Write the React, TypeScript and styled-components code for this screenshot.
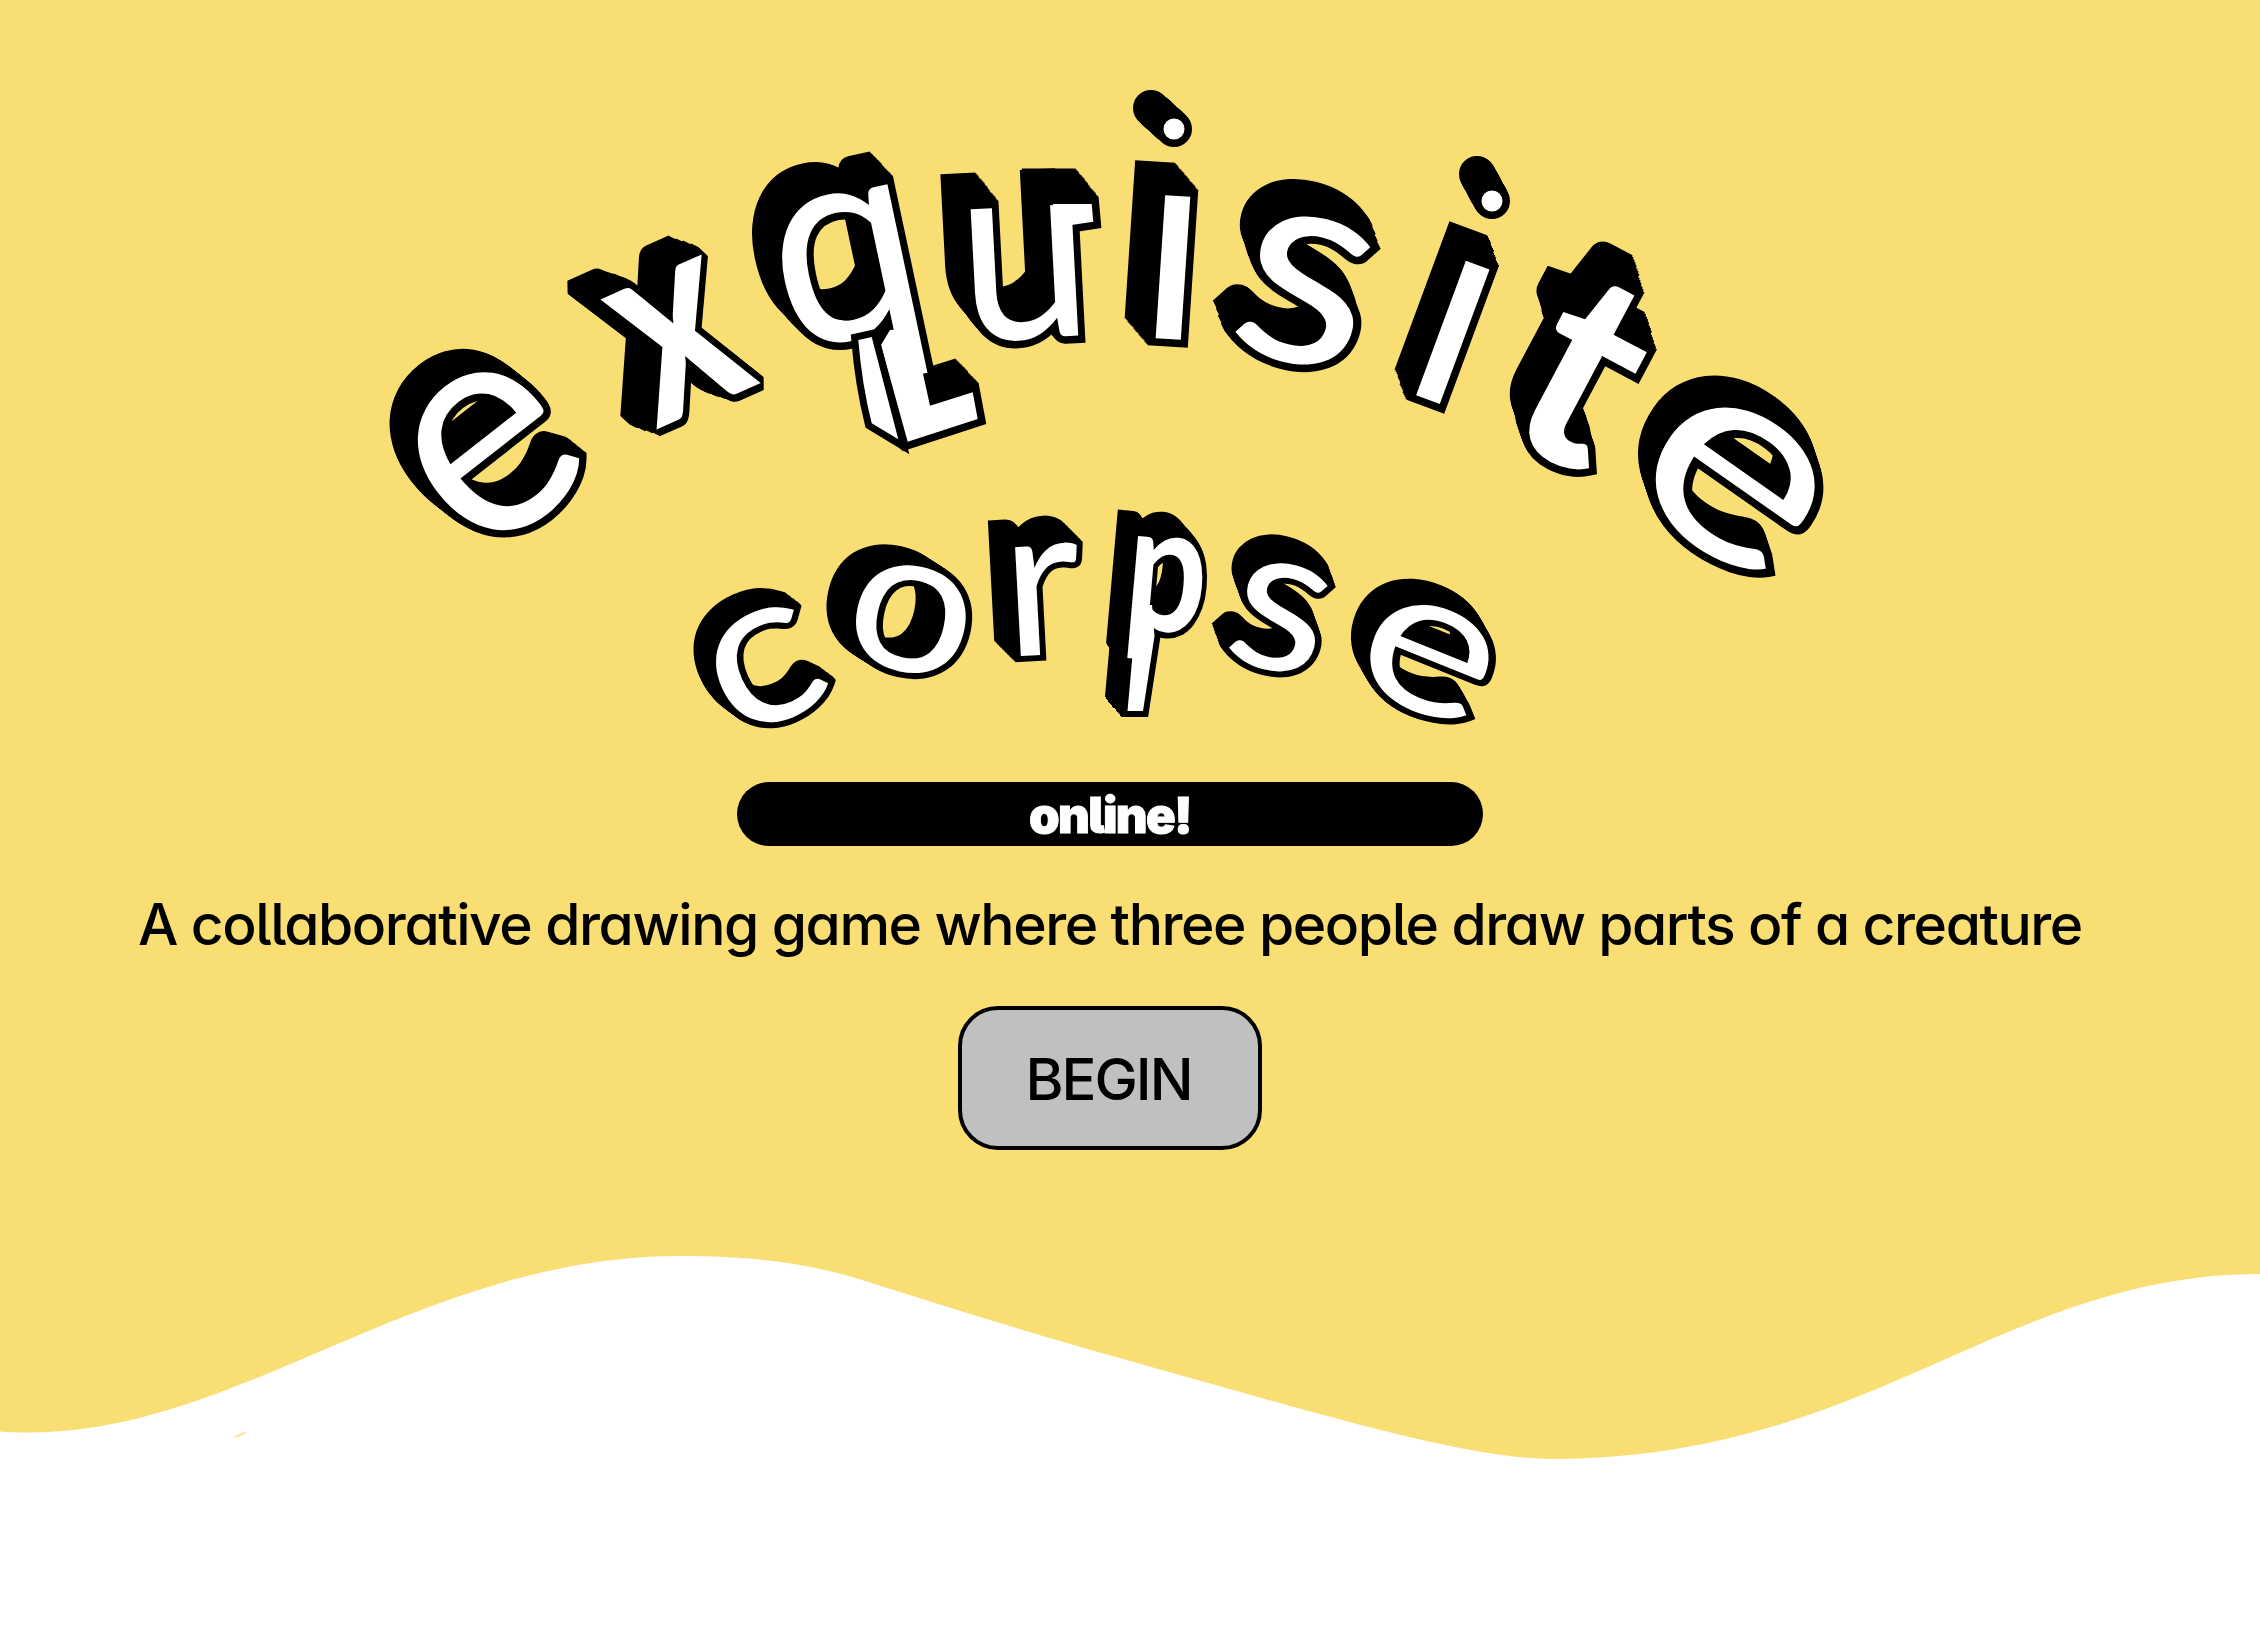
import React from "react";
import styled, { createGlobalStyle } from "styled-components";

const YELLOW = "#f9de74";

const GlobalStyle = createGlobalStyle`
  body {
    margin: 0;
    background: #fff;
    font-family: Inter, "Liberation Sans", sans-serif;
    font-feature-settings: "cv11", "cv05";
  }
`;

const Page = styled.main`
  min-height: 1636px;
  overflow: hidden;
  background: ${YELLOW};
`;

const Hero = styled.section`
  display: flex;
  flex-direction: column;
  align-items: center;
  box-sizing: border-box;
  height: 1200px;
  padding: 80px 40px 0 0;
`;

const Title = styled.h1`
  margin: 0;
  line-height: 0;
`;

const Logo = styled.svg`
  display: block;
  width: 1480px;
  height: 660px;
  overflow: visible;
`;

/* Doubling hard shadows sweeps the outlined glyph along the depth vector. */
const Extruded = styled.g<{ $dx: number; $dy: number }>`
  filter: ${({ $dx, $dy }) =>
    [1, 2, 4, 8, 16]
      .map((n) => `drop-shadow(${(($dx * n) / 31).toFixed(2)}px ${(($dy * n) / 31).toFixed(2)}px 0 #000)`)
      .join(" ")};
`;

const Glyph = styled.text<{ $size: number; $outline: number; $weight: number }>`
  font-family: Lato, "Liberation Sans", sans-serif;
  font-size: ${({ $size }) => $size}px;
  font-weight: ${({ $weight }) => $weight};
  text-anchor: middle;
  fill: #fff;
  stroke: #000;
  stroke-width: ${({ $outline }) => $outline * 2}px;
  stroke-linejoin: miter;
  stroke-miterlimit: 2;
  paint-order: stroke;
`;

const FlourishEdge = styled.path<{ $outline: number }>`
  fill: none;
  stroke: #000;
  stroke-width: ${({ $outline }) => $outline * 2}px;
`;

const FlourishFace = styled.path`
  fill: #fff;
`;

const Dot = styled.circle<{ $outline: number }>`
  fill: #fff;
  stroke: #000;
  stroke-width: ${({ $outline }) => $outline * 2}px;
  paint-order: stroke;
`;

const SidePanel = styled.path`
  fill: #fff;
  stroke: #000;
  stroke-width: 14px;
  paint-order: stroke;
`;

const Badge = styled.div`
  display: flex;
  align-items: center;
  justify-content: center;
  box-sizing: border-box;
  width: 746px;
  height: 64px;
  margin-top: 42px;
  padding-top: 3px;
  border-radius: 32px;
  background: #000;
  color: #fff;
  font-size: 49px;
  font-weight: 900;
  letter-spacing: -1.7px;
  -webkit-text-stroke: 1px #fff;
`;

const Tagline = styled.p`
  margin: 44px 0 0;
  height: 70px;
  line-height: 70px;
  white-space: nowrap;
  color: #000;
  font-size: 57px;
  font-weight: 500;
  letter-spacing: -1.42px;
`;

const BeginButton = styled.button`
  width: 304px;
  height: 144px;
  margin-top: 46px;
  padding: 2px 3px 0 0;
  border: 4px solid #000;
  border-radius: 40px;
  background: #c0c0c0;
  color: #000;
  font-family: inherit;
  font-size: 58px;
  font-weight: 500;
  letter-spacing: -2px;
`;

const Wave = styled.svg`
  display: block;
  width: 100%;
  height: 436px;
`;

type Letter = {
  char: string;
  x: number;
  y: number;
  size: number;
  turn: number;
  depth: [number, number];
  stretch?: number;
  mid?: number;
  weight?: number;
  dot?: { at: [number, number]; depth: [number, number] };
  flourish?: string;
};

const EXQUISITE: Letter[] = [
  { char: "e", x: 492, y: 453, size: 314, turn: -38, depth: [-19, -14], stretch: 0.96 },
  { char: "x", x: 680, y: 342, size: 276, turn: -24, depth: [-29, -8], stretch: 0.8, weight: 700 },
  {
    char: "q", x: 847, y: 266, size: 284, turn: -12, depth: [-20, -22], stretch: 0.95,
    flourish: "M890 330 L881 345 L907.7 441.7 L977.7 419 L972.7 392.3 L930 405.7 L913 328 Z",
  },
  {
    char: "u", x: 1025, y: 272, size: 260, turn: -3, depth: [-20, -27], stretch: 0.92,
    flourish: "M1053 204 L1091.7 204 L1093.3 221.7 L1068 225.5 L1055 227 Z",
  },
  {
    char: "i", x: 1173, y: 267, size: 283, turn: 3.8, depth: [-20, -25],
    dot: { at: [1174, 129], depth: [-21, -19] },
  },
  { char: "s", x: 1305, y: 290, size: 285, turn: 14, depth: [-8, -28], stretch: 1.1 },
  {
    char: "i", x: 1453, y: 332, size: 283, turn: 20.3, depth: [-8, -29],
    dot: { at: [1492, 201], depth: [-13, -25] },
  },
  { char: "t", x: 1583, y: 374, size: 275, turn: 28, depth: [-8, -34], mid: 0.33, weight: 700 },
  { char: "e", x: 1733, y: 483, size: 280, turn: 35, depth: [-7, -22], stretch: 1.25 },
];

const CORPSE: Letter[] = [
  { char: "c", x: 765, y: 668, size: 215, turn: -24, depth: [-14, -11], stretch: 1.12 },
  { char: "o", x: 911, y: 619, size: 205, turn: 12, depth: [-20, -12], stretch: 1.1 },
  { char: "r", x: 1042, y: 600, size: 215, turn: -3, depth: [-19, -18] },
  {
    char: "p", x: 1166, y: 585, size: 180, turn: 5, depth: [-15, -16], stretch: 0.8, weight: 700,
    flourish: "M1137 605 L1127.5 711 L1143 711 L1154.5 636 L1152 605 Z",
  },
  { char: "s", x: 1280, y: 617, size: 208, turn: 14, depth: [-6, -20], stretch: 1.1 },
  { char: "e", x: 1428, y: 659, size: 205, turn: 22, depth: [-8, -16], stretch: 1.27 },
];

function Word({ letters, outline }: { letters: Letter[]; outline: number }) {
  return (
    <g>
      {letters.map((l, i) => {
        const stemClip = l.dot ? `stem-${i}` : undefined;
        return (
          <React.Fragment key={i}>
            <Extruded $dx={l.depth[0]} $dy={l.depth[1]}>
              {stemClip && (
                <clipPath id={stemClip}>
                  <rect x={-100} y={-l.size * 0.251 - 11} width={200} height={l.size} />
                </clipPath>
              )}
              {l.flourish && <FlourishEdge $outline={outline} d={l.flourish} />}
              <Glyph
                $size={l.size}
                $outline={outline}
                $weight={l.weight ?? 400}
                y={l.size * (l.mid ?? 0.255)}
                clipPath={stemClip && `url(#${stemClip})`}
                transform={`translate(${l.x} ${l.y}) rotate(${l.turn}) scale(${l.stretch ?? 1} 1)`}
              >
                {l.char}
              </Glyph>
              {l.flourish && <FlourishFace d={l.flourish} />}
            </Extruded>
            {l.dot && (
              <Extruded $dx={l.dot.depth[0]} $dy={l.dot.depth[1]}>
                <Dot $outline={outline} cx={l.dot.at[0]} cy={l.dot.at[1]} r={10.5} />
              </Extruded>
            )}
          </React.Fragment>
        );
      })}
    </g>
  );
}

export default function App() {
  return (
    <Page>
      <GlobalStyle />
      <Hero>
        <Title>
          <Logo viewBox="370 80 1480 660">
            <Word letters={EXQUISITE} outline={7.5} />
            <SidePanel d="M858.3 340 L871.7 337 L898.3 439.3 L871.7 423.3 Q862 385 858.3 340 Z" />
            <Word letters={CORPSE} outline={6} />
          </Logo>
        </Title>
        <Badge>online!</Badge>
        <Tagline>A collaborative drawing game where three people draw parts of a creature</Tagline>
        <BeginButton>BEGIN</BeginButton>
      </Hero>
      <Wave viewBox="0 1200 2260 436" preserveAspectRatio="none">
        <path
          fill="#fff"
          d="M0 1431.5 Q10 1432.5 30 1432.5 C241 1432.5 421 1256 681 1256 C755 1256 812 1264 865 1281 C950 1308 1040 1336 1130 1361 C1290 1405 1460 1459 1552 1459 C1870 1459 2003 1274 2260 1274 V1636 H0 Z"
        />
        <path d="M232 1438 Q243 1436 248 1431.5 Q239 1433 232 1438" fill={YELLOW} opacity="0.8" />
      </Wave>
    </Page>
  );
}
